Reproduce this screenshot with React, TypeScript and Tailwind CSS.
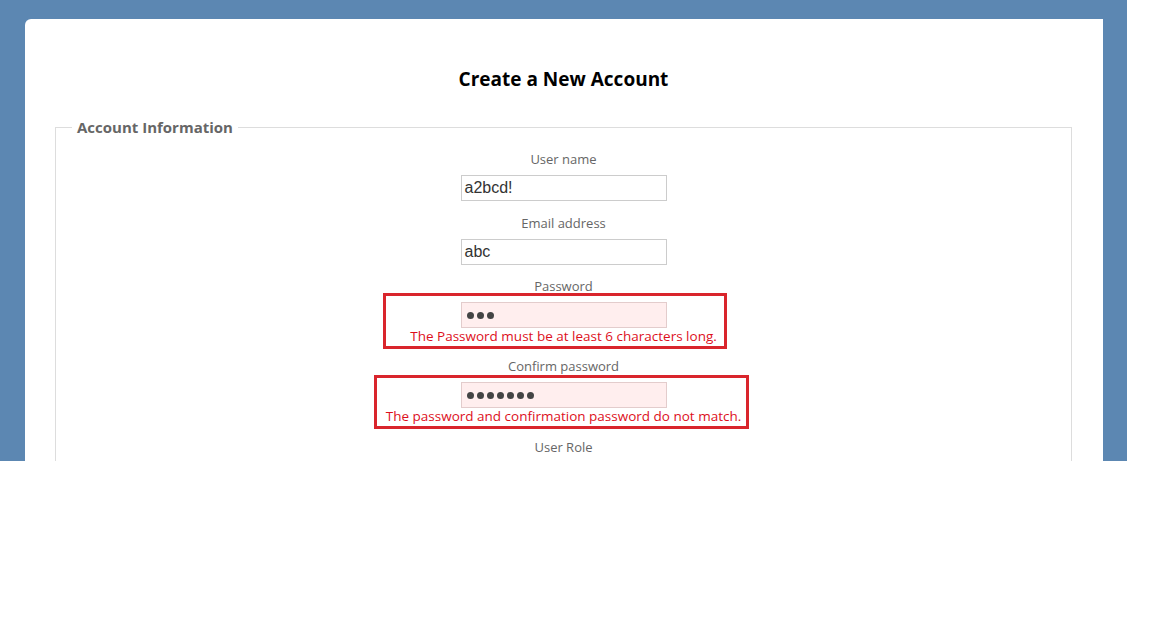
import React from "react";

const font = { fontFamily: '"Open Sans", "DejaVu Sans", sans-serif' };

function Label({ children, className = "" }: { children: React.ReactNode; className?: string }) {
  return (
    <div className={`text-[13px] leading-[18px] text-[#666666] ${className}`}>{children}</div>
  );
}

function Field({ value, error = false, dots = 0 }: { value?: string; error?: boolean; dots?: number }) {
  return (
    <div
      className={`mx-auto mt-[7px] w-[206px] h-[26px] border text-left pl-[3px] flex items-center ${
        error ? "bg-[#ffeeee] border-[#e3cccc]" : "bg-white border-[#cccccc]"
      }`}
    >
      {dots > 0 ? (
        <div className="flex gap-[3px] pl-[2px]">
          {Array.from({ length: dots }).map((_, i) => (
            <span key={i} className="block w-[7px] h-[7px] rounded-full bg-[#444444]" />
          ))}
        </div>
      ) : (
        <span className="text-[16px] text-[#333333]" style={{ fontFamily: '"Liberation Sans", Arial, sans-serif' }}>
          {value}
        </span>
      )}
    </div>
  );
}

export default function App() {
  return (
    <div className="w-[1160px] h-[623px] bg-white overflow-hidden" style={font}>
      <div className="w-[1127px] h-[461px] bg-[#5c87b2] overflow-hidden pt-[19px] pl-[25px] pr-[24px]">
        <div className="bg-white rounded-tl-[6px] h-[560px] pt-[48px] px-[30px] pr-[31px]">
          <h2 className="text-center text-[19px] leading-[24px] font-bold text-black">Create a New Account</h2>
          <fieldset className="mt-[27px] border border-[#dddddd] text-left">
            <legend className="ml-[16px] px-[5px] text-[15px] leading-[18px] font-bold text-[#666666] text-left">
              Account Information
            </legend>
            <div className="pt-[14px] pb-[80px] text-center">
              <Label>User name</Label>
              <Field value="a2bcd!" />
              <Label className="mt-[13px]">Email address</Label>
              <Field value="abc" />
              <Label className="mt-[12px]">Password</Label>
              <div className="relative">
                <Field error dots={3} />
                <div className="text-[13.5px] leading-[16px] text-[#dd0f1c]">
                  The Password must be at least 6 characters long.
                </div>
                <div className="absolute left-[calc(50%-181px)] top-[-9px] w-[344px] h-[56px] border-[3px] border-[#d9252c]" />
              </div>
              <Label className="mt-[13px]">Confirm password</Label>
              <div className="relative">
                <Field error dots={7} />
                <div className="text-[13.5px] leading-[16px] text-[#dd0f1c]">
                  The password and confirmation password do not match.
                </div>
                <div className="absolute left-[calc(50%-190px)] top-[-7px] w-[375px] h-[54px] border-[3px] border-[#d9252c]" />
              </div>
              <Label className="mt-[14px]">User Role</Label>
            </div>
          </fieldset>
        </div>
      </div>
    </div>
  );
}
